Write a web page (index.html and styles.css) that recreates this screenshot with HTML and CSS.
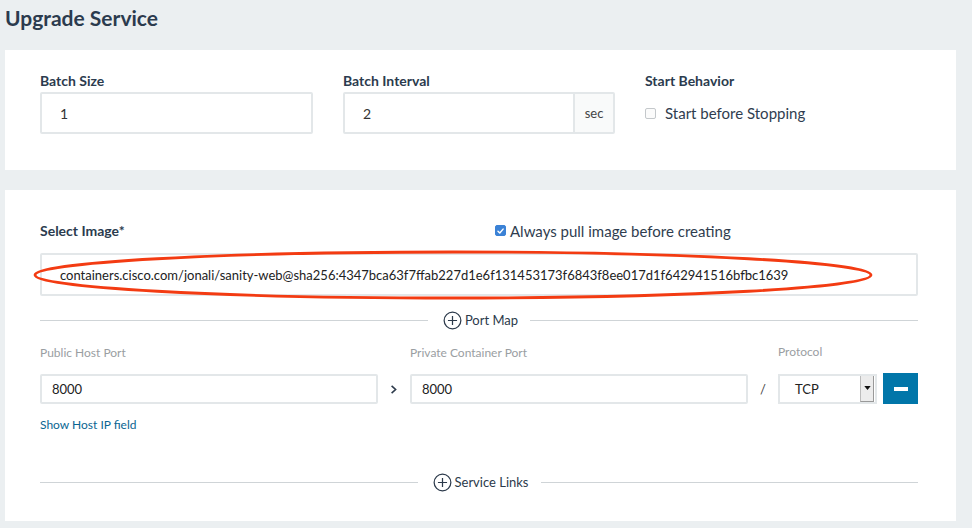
FILE: index.html
```html
<!DOCTYPE html>
<html>
<head>
<meta charset="utf-8">
<link rel="stylesheet" href="styles.css">
</head>
<body>
<div class="page">
  <h1 class="title">Upgrade Service</h1>

  <section class="card card-batch">
    <div class="grid3">
      <div class="field">
        <label class="label">Batch Size</label>
        <div class="input big"><span>1</span></div>
      </div>
      <div class="field">
        <label class="label">Batch Interval</label>
        <div class="input big group"><span class="grow">2</span><span class="addon">sec</span></div>
      </div>
      <div class="field">
        <label class="label">Start Behavior</label>
        <div class="check-row"><span class="cb"></span><span>Start before Stopping</span></div>
      </div>
    </div>
  </section>

  <section class="card card-image">
    <div class="image-head">
      <label class="label">Select Image*</label>
      <div class="check-row small"><span class="cb checked"><svg viewBox="0 0 10 10" width="10" height="10"><path d="M2.2 5.2 L4.2 7.2 L7.9 2.9" fill="none" stroke="#fff" stroke-width="1.6" stroke-linecap="round" stroke-linejoin="round"/></svg></span><span>Always pull image before creating</span></div>
    </div>
    <div class="image-wrap">
      <div class="input image-input"><span>containers.cisco.com/jonali/sanity-web@sha256:4347bca63f7ffab227d1e6f131453173f6843f8ee017d1f642941516bfbc1639</span></div>
      <svg class="annot" width="850" height="56" viewBox="0 0 850 56"><ellipse cx="424" cy="28" rx="418" ry="23" fill="none" stroke="#f33b12" stroke-width="2.8"/></svg>
    </div>

    <div class="divider"><span class="line"></span><span class="div-label"><span class="plus"><svg viewBox="0 0 20 20" width="19" height="19"><circle cx="10" cy="10" r="8.8" fill="none" stroke="#2c3a4b" stroke-width="1.3"/><path d="M10 5.2 V14.8 M5.2 10 H14.8" stroke="#2c3a4b" stroke-width="1.3"/></svg></span>Port Map</span><span class="line"></span></div>

    <div class="ports">
      <div class="pcol">
        <div class="plabel">Public Host Port</div>
        <div class="input small-in"><span>8000</span></div>
      </div>
      <div class="sep arrow"><svg viewBox="0 0 10 12" width="8" height="11"><path d="M2 1.5 L7 6 L2 10.5" fill="none" stroke="#2c3a4b" stroke-width="2"/></svg></div>
      <div class="pcol">
        <div class="plabel">Private Container Port</div>
        <div class="input small-in"><span>8000</span></div>
      </div>
      <div class="sep slash">/</div>
      <div class="proto">
        <div class="plabel">Protocol</div>
        <div class="proto-row">
          <div class="select"><span class="grow">TCP</span><span class="sel-btn"><svg viewBox="0 0 8 5" width="7" height="4"><path d="M0 0 H8 L4 5 Z" fill="#111"/></svg></span></div>
          <div class="minus"><span></span></div>
        </div>
      </div>
    </div>
    <a class="link">Show Host IP field</a>

    <div class="divider bottom"><span class="line"></span><span class="div-label"><span class="plus"><svg viewBox="0 0 20 20" width="19" height="19"><circle cx="10" cy="10" r="8.8" fill="none" stroke="#2c3a4b" stroke-width="1.3"/><path d="M10 5.2 V14.8 M5.2 10 H14.8" stroke="#2c3a4b" stroke-width="1.3"/></svg></span>Service Links</span><span class="line"></span></div>
  </section>
</div>
</body>
</html>
```

FILE: styles.css
```css
* { box-sizing: border-box; }
html, body { margin: 0; padding: 0; }
body {
  background: #ebeff1;
  font-family: Lato, "Open Sans", sans-serif;
  color: #2c3a4b;
  width: 972px;
  height: 528px;
  overflow: hidden;
}
.page { padding: 0 16px 0 5px; }
.title {
  margin: 0;
  height: 50px;
  padding-top: 3px;
  font-size: 21px;
  font-weight: 700;
  color: #2b3b4e;
  line-height: 29px;
}
.card { background: #fff; padding: 0 38px 0 35px; }
.card-batch { height: 120px; padding-top: 22px; }
.card-image { margin-top: 20px; height: 331px; padding-top: 32px; position: relative; }
.grid3 { display: grid; grid-template-columns: 273px 272px 1fr; column-gap: 30px; }
.field { display: flex; flex-direction: column; }
.label { font-size: 14px; font-weight: 700; line-height: 17px; color: #2b3b4e; }
.field .label { margin-bottom: 3px; }
.input {
  border: 2px solid #e3e7e9;
  border-radius: 2px;
  background: #fff;
  display: flex;
  align-items: center;
  color: #333;
}
.big { height: 42px; padding-left: 18px; font-size: 14px; }
.group { padding-left: 0; }
.group .grow { flex: 1; padding-left: 18px; }
.addon {
  width: 40px; height: 100%;
  border-left: 2px solid #e3e7e9;
  background: #f9fafa;
  display: flex; align-items: center; justify-content: center;
  font-size: 13px; color: #444;
}
.check-row { display: flex; align-items: center; gap: 9px; font-size: 15px; margin-top: 12px; color: #2f3d4f; }
.cb {
  width: 11px; height: 11px;
  border: 1px solid #c4c8cb;
  border-radius: 2px;
  background: #fbfbfb;
  display: inline-flex; align-items: center; justify-content: center;
}
.cb.checked { background: #3b82d6; border-color: #3b82d6; border-radius: 2px; }
.image-head { display: flex; align-items: center; height: 17px; }
.image-head .label { width: 455px; }
.check-row.small { margin-top: 0; gap: 4px; font-size: 15px; }
.image-wrap { position: relative; margin-top: 14px; }
.image-input { height: 43px; padding-left: 18px; font-size: 13px; color: #222; }
.annot { position: absolute; left: -11px; top: -6px; pointer-events: none; }
.divider { display: flex; align-items: center; margin-top: 12px; height: 24px; }
.line { flex: 1; height: 1px; background: #cfd4d7; }
.div-label { display: flex; align-items: center; gap: 3px; font-size: 13px; padding: 0 12px 0 15px; color: #2c3a4b; }
.plus { display: inline-flex; }
.ports { display: flex; align-items: flex-end; margin-top: 12px; }
.pcol { width: 338px; }
.plabel { font-size: 12px; color: #9a9ea2; line-height: 15px; margin-bottom: 14px; }
.small-in { height: 30px; padding-left: 10px; font-size: 13px; color: #222; }
.sep { height: 30px; display: flex; align-items: center; justify-content: center; }
.arrow { width: 32px; }
.slash { width: 30px; font-size: 13px; color: #444; }
.proto { width: 140px; }
.proto-row { display: flex; gap: 6px; align-items: center; }
.select {
  width: 99px; height: 30px;
  border: 2px solid #e3e7e9;
  display: flex; align-items: center;
  font-size: 13px; color: #222;
}
.select .grow { flex: 1; padding-left: 15px; }
.sel-btn {
  width: 14px; height: 26px;
  background: #ececec;
  border-left: 1px solid #bbb;
  border-right: 1px solid #999;
  border-bottom: 1px solid #999;
  display: flex; align-items: center; justify-content: center;
  margin-right: 1px;
}
.minus {
  width: 35px; height: 31px;
  background: #0176a9;
  display: flex; align-items: center; justify-content: center;
}
.minus span { width: 14px; height: 4px; background: #fff; }
.link { display: block; margin-top: 14px; font-size: 12px; color: #0a6592; line-height: 14px; }
.divider.bottom { margin-top: 38px; }
```
